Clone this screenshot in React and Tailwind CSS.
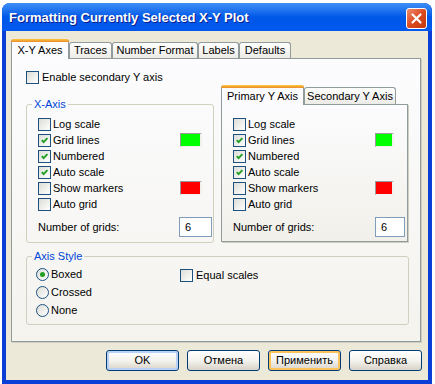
import React from 'react';

const ui = "font-['Liberation_Sans',Arial,sans-serif] text-[11px] text-black";

function Check({ checked }) {
  return (
    <span className="relative block w-[13px] h-[13px] shrink-0 border border-[#1c5180] bg-linear-to-br from-[#dcdcd7] to-white">
      {checked && (
        <svg viewBox="0 0 11 11" className="absolute inset-0 w-[11px] h-[11px]">
          <path d="M2.8 5.2 L4.6 7.2 L8.4 3.2" stroke="#21a121" strokeWidth="1.9" fill="none" />
        </svg>
      )}
    </span>
  );
}

function Radio({ on }) {
  return (
    <span className="flex w-[13px] h-[13px] shrink-0 items-center justify-center rounded-full border border-[#1c5180] bg-linear-to-br from-[#dcdcd7] to-white">
      {on && <span className="block w-[5px] h-[5px] rounded-full bg-[#21a121]" />}
    </span>
  );
}

function Swatch({ color, w }) {
  return (
    <span className={`block h-[14px] ${w} border border-t-[#9a9a9a] border-l-[#9a9a9a] border-r-[#f2f1ec] border-b-[#f2f1ec] border-r-2 ${color}`} />
  );
}

function Tab({ label, w, active, h }) {
  if (active) {
    return (
      <div className={`relative z-10 -mb-px flex h-[20px] ${w} flex-col rounded-t-[3px] border-x border-[#919b9c] bg-[#fcfcfe]`}>
        <div className="-mx-px h-[3px] rounded-t-[3px] bg-linear-to-b from-[#ffc83c] to-[#e68b2c]" />
        <div className="flex flex-1 items-center justify-center">{label}</div>
      </div>
    );
  }
  return (
    <div className={`flex ${h} ${w} items-center justify-center rounded-t-[3px] border border-b-0 border-[#919b9c] bg-linear-to-b from-white to-[#ecebe6]`}>
      {label}
    </div>
  );
}

const rows = [
  { label: 'Log scale', checked: false },
  { label: 'Grid lines', checked: true, swatch: 'bg-[#00ff00]' },
  { label: 'Numbered', checked: true },
  { label: 'Auto scale', checked: true },
  { label: 'Show markers', checked: false, swatch: 'bg-[#ff0000]' },
  { label: 'Auto grid', checked: false },
];

function AxisRows({ swW, swMr, inW, inMr }) {
  return (
    <>
      {rows.map((r) => (
        <div key={r.label} className="flex h-[16px] items-center">
          <Check checked={r.checked} />
          <span className="ml-[2px] flex-1">{r.label}</span>
          {r.swatch && (
            <span className={swMr}>
              <Swatch color={r.swatch} w={swW} />
            </span>
          )}
        </div>
      ))}
      <div className="mt-[5px] flex h-[20px] items-center">
        <span className="flex-1">Number of grids:</span>
        <span className={`flex h-[20px] ${inW} ${inMr} items-center border border-[#7f9db9] bg-white pl-[5px]`}>6</span>
      </div>
    </>
  );
}

function Btn({ children, ring }) {
  return (
    <button className={`h-[21px] w-[73px] rounded-[3px] border border-[#003c74] bg-linear-to-b from-white via-[#f4f3ee] to-[#d9d3c8] ${ring}`}>
      {children}
    </button>
  );
}

export default function App() {
  return (
    <div className={`h-[384px] w-[435px] overflow-hidden bg-white pl-[2px] pt-[3px] ${ui}`}>
      <div className="flex h-[381px] w-[430px] flex-col overflow-hidden rounded-t-[8px] bg-[#0a3ed6]">
        {/* Title bar */}
        <div className="flex h-[28px] shrink-0 items-start bg-linear-to-b from-[#3d8ff5] via-[#0058e8] to-[#0058ee] pl-[7px] pr-[5px]">
          <span className="mt-[5px] flex-1 text-[13px] font-bold text-white [text-shadow:1px_1px_0_#0a1c8a]">
            Formatting Currently Selected X-Y Plot
          </span>
          <span className="mt-[5px] flex h-[21px] w-[21px] items-center justify-center rounded-[3px] border border-white bg-linear-to-br from-[#ef8a6a] via-[#dc4b1f] to-[#c4360e]">
            <svg viewBox="0 0 13 13" className="h-[13px] w-[13px]">
              <path d="M2.5 2.5 L10.5 10.5 M10.5 2.5 L2.5 10.5" stroke="white" strokeWidth="2.2" strokeLinecap="round" />
            </svg>
          </span>
        </div>

        {/* Body */}
        <div className="mx-[4px] mb-[4px] flex-1 bg-[#ece9d8] pl-[5px] pt-[8px]">
          <div className="flex items-end">
            <Tab label="X-Y Axes" w="w-[58px]" active />
            <Tab label="Traces" w="w-[43px]" h="h-[16px]" />
            <Tab label="Number Format" w="w-[86px]" h="h-[16px]" />
            <Tab label="Labels" w="w-[41px]" h="h-[16px]" />
            <Tab label="Defaults" w="w-[52px]" h="h-[16px]" />
          </div>

          <div className="w-[410px] border border-[#919b9c] bg-linear-to-b from-[#fcfcfe] to-[#f4f3ee] pb-[16px] pl-[14px] pt-[12px] shadow-[1px_1px_0_#d0cebf]">
            <div className="flex h-[13px] items-center">
              <Check />
              <span className="ml-[3px]">Enable secondary Y axis</span>
            </div>

            <div className="mt-[1px] flex items-start">
              <fieldset className="mt-[13px] w-[188px] rounded-[3px] border border-[#d0d0bf] pb-[5px] pl-[5px] pr-[1px]">
                <legend className="px-[2px] leading-[13px] text-[#0046d5]">X-Axis</legend>
                <div className="pl-[6px] pt-[5px]">
                  <AxisRows swW="w-[22px]" swMr="mr-[10px]" inW="w-[33px]" inMr="mr-0" />
                </div>
              </fieldset>

              <div className="ml-[7px] w-[187px]">
                <div className="flex items-end">
                  <Tab label="Primary Y Axis" w="w-[83px]" active />
                  <Tab label="Secondary Y Axis" w="w-[92px]" h="h-[17px]" />
                </div>
                <div className="border border-[#919b9c] bg-linear-to-b from-[#fcfcfe] to-[#f1f0ea] pb-[4px] pl-[11px] pr-[2px] pt-[11px] shadow-[1px_1px_0_#d0cebf]">
                  <AxisRows swW="w-[19px]" swMr="mr-[11px]" inW="w-[30px]" inMr="mr-0" />
                </div>
              </div>
            </div>

            <fieldset className="mt-[7px] w-[383px] rounded-[3px] border border-[#d0d0bf] pb-[5px] pl-[5px]">
              <legend className="px-[2px] leading-[13px] text-[#0046d5]">Axis Style</legend>
              <div className="flex pl-[4px] pt-[2px]">
                <div className="w-[144px]">
                  {[['Boxed', true], ['Crossed', false], ['None', false]].map(([t, on]) => (
                    <div key={t} className="flex h-[18px] items-center">
                      <Radio on={on} />
                      <span className="ml-[2px]">{t}</span>
                    </div>
                  ))}
                </div>
                <div className="mt-[1px] flex h-[18px] items-center">
                  <Check />
                  <span className="ml-[3px]">Equal scales</span>
                </div>
              </div>
            </fieldset>
          </div>

          <div className="mt-[8px] flex justify-end gap-[8px] pr-[6px]">
            <Btn ring="shadow-[inset_0_0_0_2px_#b9d1f6]">OK</Btn>
            <Btn>Отмена</Btn>
            <Btn ring="shadow-[inset_0_0_0_2px_#fbc35a]">Применить</Btn>
            <Btn>Справка</Btn>
          </div>
        </div>
      </div>
    </div>
  );
}
